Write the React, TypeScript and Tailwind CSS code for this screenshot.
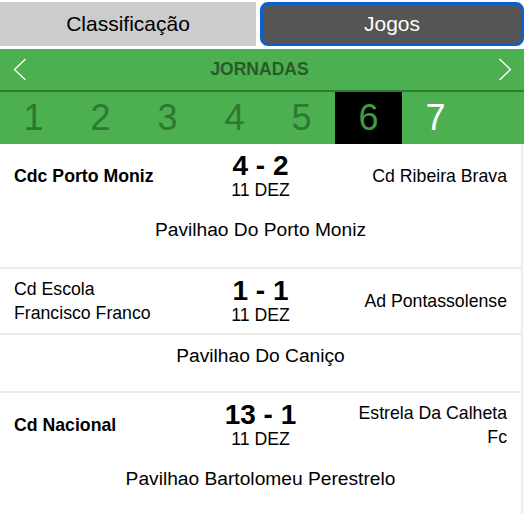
import React from "react";

const Chevron = ({ dir }: { dir: "left" | "right" }) => (
  <svg width="14" height="23" viewBox="0 0 14 23" fill="none">
    {dir === "left" ? (
      <polyline points="12.5,1 1.5,11.5 12.5,22" stroke="white" strokeWidth="1.4" />
    ) : (
      <polyline points="1.5,1 12.5,11.5 1.5,22" stroke="white" strokeWidth="1.4" />
    )}
  </svg>
);

type Match = {
  home: string[];
  homeBold: boolean;
  away: string[];
  score: string;
  date: string;
  venue: string;
  midBorder?: boolean;
};

const matches: Match[] = [
  { home: ["Cdc Porto Moniz"], homeBold: true, away: ["Cd Ribeira Brava"], score: "4 - 2", date: "11 DEZ", venue: "Pavilhao Do Porto Moniz" },
  { home: ["Cd Escola", "Francisco Franco"], homeBold: false, away: ["Ad Pontassolense"], score: "1 - 1", date: "11 DEZ", venue: "Pavilhao Do Caniço", midBorder: true },
  { home: ["Cd Nacional"], homeBold: true, away: ["Estrela Da Calheta", "Fc"], score: "13 - 1", date: "11 DEZ", venue: "Pavilhao Bartolomeu Perestrelo" },
];

export default function App() {
  const nums = [1, 2, 3, 4, 5, 6, 7];
  return (
    <div className="w-[526px] h-[514px] overflow-hidden bg-white font-['Liberation_Sans',Arial,sans-serif] text-black">
      {/* Tabs */}
      <div className="flex w-[524px] h-[49px] pt-[2px] pb-[3px] gap-[4px]">
        <div className="w-[256px] bg-[#cccccc] flex items-center justify-center text-[21px] text-black">
          Classificação
        </div>
        <div className="flex-1 bg-[#555555] border-[3px] border-[#0b60d0] rounded-[8px] flex items-center justify-center text-[21px] text-white">
          Jogos
        </div>
      </div>

      {/* Jornadas bar */}
      <div className="w-[524px] bg-[#4caf50]">
        <div className="h-[43px] flex items-center justify-between pl-[13px] pr-[12px] border-b-2 border-[#2e7d32]">
          <Chevron dir="left" />
          <span className="text-[17.5px] font-bold text-[#2a5a2c] -ml-[6px]">JORNADAS</span>
          <Chevron dir="right" />
        </div>
        <div className="h-[52px] flex">
          {nums.map((n) => (
            <div
              key={n}
              className={
                n === 6
                  ? "w-[67px] flex items-center justify-center text-[36px] bg-black text-[#3f9c43]"
                  : n === 7
                  ? "w-[67px] flex items-center justify-center text-[36px] text-white"
                  : "w-[67px] flex items-center justify-center text-[36px] text-[#2f7833]"
              }
            >
              {n}
            </div>
          ))}
        </div>
      </div>

      {/* Matches */}
      <div className="w-[523px] border-r-2 border-[#ececec]">
        {matches.map((m, i) => (
          <div key={i} className={i > 0 ? "border-t-2 border-[#ececec]" : ""}>
            <div className={"flex items-center py-2 px-[14px] " + (m.midBorder ? "border-b-2 border-[#ececec]" : "border-b-2 border-transparent")}>
              <div className={"flex-1 text-[17.7px] leading-[24px] " + (m.homeBold ? "font-bold" : "")}>
                {m.home.map((l, k) => (
                  <div key={k}>{l}</div>
                ))}
              </div>
              <div className="w-[120px] flex flex-col items-center">
                <div className="text-[28px] leading-[28px] font-bold">{m.score}</div>
                <div className="text-[17.7px] leading-[20px]">{m.date}</div>
              </div>
              <div className="flex-1 text-right text-[17.7px] leading-[24px]">
                {m.away.map((l, k) => (
                  <div key={k}>{l}</div>
                ))}
              </div>
            </div>
            <div className={"text-center text-[19.2px] leading-[22px] " + (m.midBorder ? "pt-[10px] pb-[24px]" : "pt-[9px] pb-[26px]")}>
              {m.venue}
            </div>
          </div>
        ))}
      </div>
    </div>
  );
}
